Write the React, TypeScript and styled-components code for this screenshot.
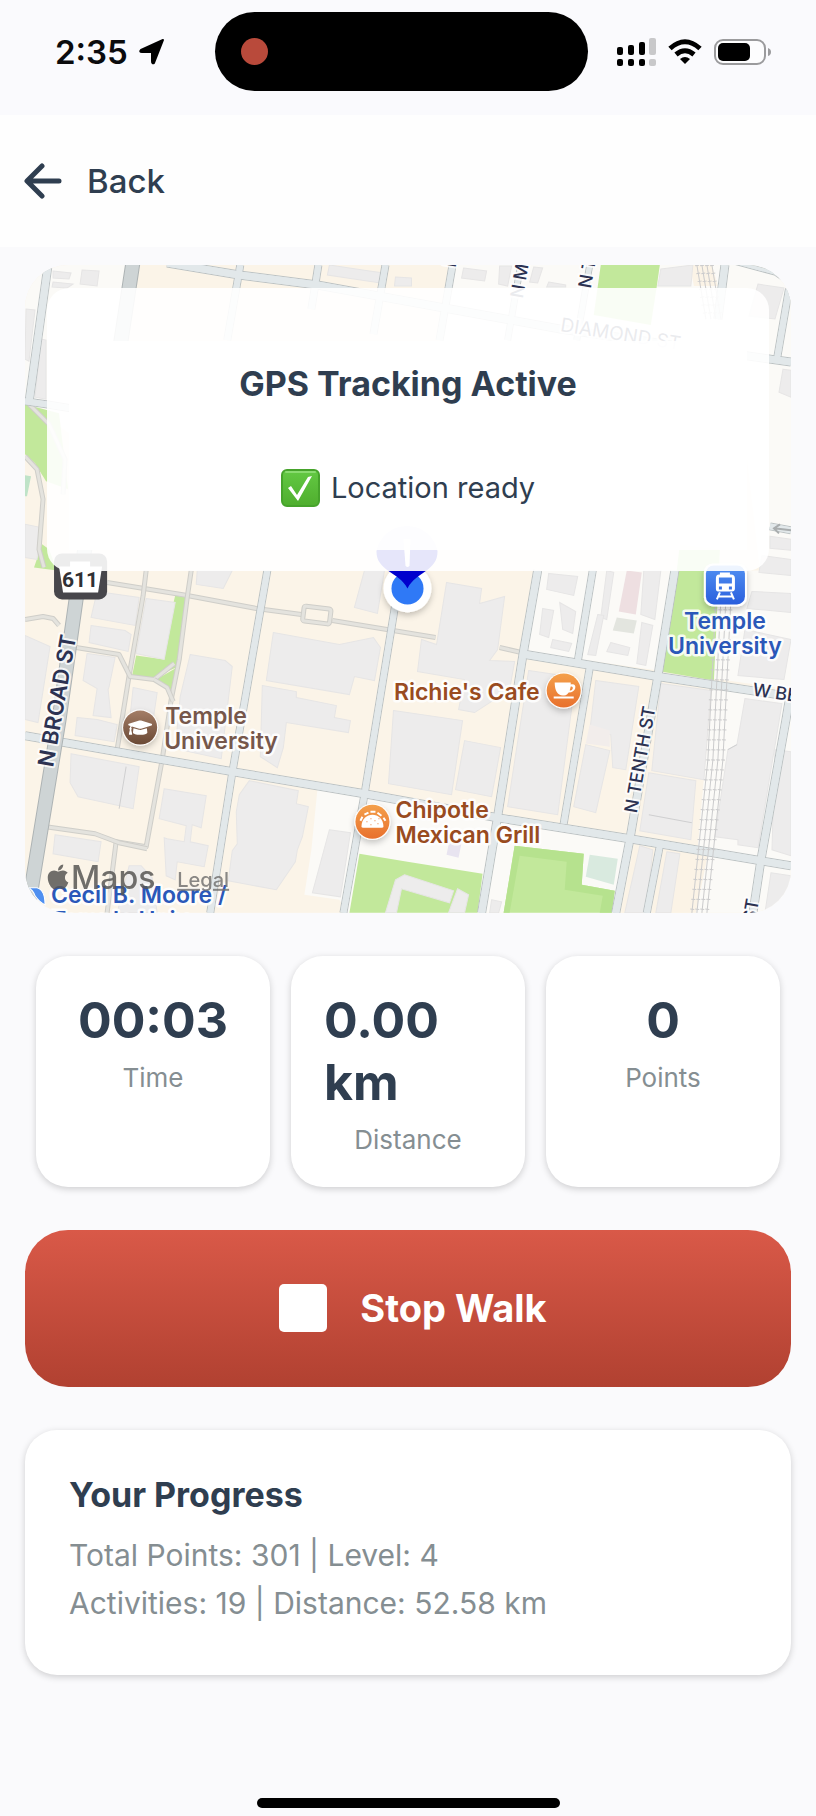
import React from "react";
import styled, { createGlobalStyle } from "styled-components";
import { FaApple, FaGraduationCap } from "react-icons/fa";

const ink = "#2f3e50";
const muted = "#858e92";

const GlobalStyle = createGlobalStyle`
  * { box-sizing: border-box; }
  body {
    margin: 0;
    background: #fafafc;
    color: ${ink};
    font-family: Inter, "Liberation Sans", sans-serif;
  }
  button { font: inherit; color: inherit; border: 0; cursor: pointer; }
  h1, h2, p, dl, dd, dt { margin: 0; }
`;

const Screen = styled.div`
  min-height: 100vh;
  display: flex;
  flex-direction: column;
`;

const StatusBar = styled.div`
  display: grid;
  grid-template-columns: 1fr 373px 1fr;
  align-items: center;
  height: 115px;
  padding: 0 45px 12px 32px;
  background: #fafafd;
  color: #0b0b0d;
`;

const Clock = styled.div`
  display: flex;
  align-items: center;
  gap: 10px;
  padding-left: 23px;
  font-size: 33px;
  font-weight: 600;
  line-height: 40px;
`;

const Island = styled.div`
  display: flex;
  align-items: center;
  height: 79px;
  padding-left: 26px;
  border-radius: 40px;
  background: #000;
`;

const RecordingDot = styled.span`
  width: 27px;
  height: 27px;
  border-radius: 50%;
  background: #b94a3b;
`;

const Indicators = styled.div`
  display: flex;
  align-items: center;
  justify-content: flex-end;
`;

const Header = styled.header`
  display: flex;
  align-items: center;
  height: 132px;
  padding: 0 24px;
  background: #fefefe;
`;

const BackButton = styled.button`
  display: flex;
  align-items: center;
  gap: 24px;
  padding: 0;
  background: none;
  font-size: 33px;
  font-weight: 500;
  line-height: 40px;
`;

const Content = styled.main`
  flex: 1;
  display: flex;
  flex-direction: column;
  gap: 43px;
  padding: 18px 25px 0;
`;

const MapCard = styled.section`
  position: relative;
  overflow: hidden;
  border-radius: 43px;
`;

const MapCanvas = styled.svg`
  display: block;
  width: 100%;
  height: auto;
`;

const StatusPanel = styled.div`
  position: absolute;
  top: 23px;
  left: 22px;
  right: 22px;
  padding: 53px 22px 21px;
  border-radius: 22px;
  background: rgba(255, 255, 255, 0.9);
`;

const StatusBody = styled.div`
  display: flex;
  flex-direction: column;
  align-items: center;
  gap: 64px;
  height: 209px;
  padding-top: 22px;
  background: rgba(255, 255, 255, 0.9);
`;

const StatusTitle = styled.h1`
  font-size: 34px;
  font-weight: 700;
  line-height: 42px;
`;

const StatusLine = styled.p`
  display: flex;
  align-items: center;
  gap: 11px;
  font-size: 29px;
  line-height: 38px;
`;

const Stats = styled.dl`
  display: grid;
  grid-template-columns: repeat(3, 1fr);
  gap: 21px;
  padding: 0 11px;
`;

const cardShadow = "0 2px 7px rgba(0, 0, 0, 0.18)";

const StatCard = styled.div`
  display: flex;
  flex-direction: column;
  align-items: center;
  gap: 11px;
  padding: 33px 33px 32px;
  border-radius: 32px;
  background: #fff;
  box-shadow: ${cardShadow};
`;

const StatValue = styled.dd`
  font-size: 50px;
  font-weight: 700;
  line-height: 62px;
`;

const StatLabel = styled.dt`
  order: 1;
  color: ${muted};
  font-size: 26px;
  line-height: 31px;
`;

const StopButton = styled.button`
  display: flex;
  align-items: center;
  justify-content: center;
  gap: 33px;
  height: 157px;
  padding: 0 6px 0 16px;
  border-radius: 43px;
  background: linear-gradient(#d95948, #b14131);
  color: #fff;
  font-size: 38px;
  font-weight: 700;
`;

const StopSquare = styled.span`
  width: 48px;
  height: 48px;
  border-radius: 5px;
  background: #fff;
`;

const ProgressCard = styled.section`
  padding: 43px 44px 36px;
  min-height: 245px;
  border-radius: 32px;
  background: #fff;
  box-shadow: ${cardShadow};
`;

const ProgressTitle = styled.h2`
  margin-bottom: 14px;
  font-size: 34px;
  font-weight: 700;
  line-height: 44px;
`;

const ProgressLine = styled.p`
  color: ${muted};
  font-size: 30px;
  line-height: 48px;
`;

const HomeBar = styled.div`
  align-self: center;
  width: 303px;
  height: 10px;
  margin: 24px 0 8px;
  border-radius: 5px;
  background: #000;
`;

const PlaceText = styled.text`
  font-weight: 600;
  font-size: 23px;
  stroke: #fff;
  stroke-opacity: 0.85;
  stroke-width: 5px;
  stroke-linejoin: round;
  paint-order: stroke;
`;

const StreetText = styled.text<{ $size: number; $weight?: number }>`
  fill: #2c3252;
  font-size: ${(p) => p.$size}px;
  font-weight: ${(p) => p.$weight ?? 500};
  stroke: #fff;
  stroke-opacity: 0.8;
  stroke-width: 4px;
  stroke-linejoin: round;
  paint-order: stroke;
`;

const brown = "#76574b";
const rust = "#994b20";
const blue = "#2b58b9";

const paleBlocks = [
  "538,571 791,571 791,690 526,652",
  "26,266 130,266 96,450 78,440 26,402",
  "451,266 791,266 791,571 760,571 740,400 440,350",
  "318,790 498,819 630,840 617,913 347,913 340,900 305,895 312,850",
  "712,690 791,697 791,913 692,913",
];

const creamBlocks = ["635,845 658,849 646,913 622,913", "664,848 708,855 696,913 652,913", "690,266 712,266 718,287 694,287"];

const parks = [
  "26,405 60,414 69,490 47,482 36,464 26,455",
  "43,545 50,550 58,571 35,568",
  "601,266 660,266 657,287 651,326 594,316",
  "176,596 188,598 182,660 177,668 152,679 133,676 137,656 165,660 168,630",
  "157,680 176,669 173,694 167,686",
  "680,545 720,550 714,681 661,672 672,612",
  "360,854 408,862 483,874 478,913 350,913",
  "515,846 584,854 582,885 615,891 612,913 504,913",
];

const buildings = [
  "83,271 100,272 98,287 81,285",
  "54,272 72,274 70,280 54,279",
  "54,283 74,285 68,289 53,288",
  "27,310 36,311 30,362 26,360",
  "42,340 47,341 47,400 36,398",
  "330,266 370,272 384,274 381,284 328,276",
  "396,278 412,279 412,287 395,287",
  "464,269 487,272 485,282 462,279",
  "500,267 512,267 508,287 499,285",
  "534,268 543,269 538,284 530,283",
  "549,283 566,286 566,288 547,288",
  "661,270 693,266 691,287 658,287",
  "758,285 784,289 775,320 749,317",
  "783,370 791,371 791,398 779,393",
  "26,525 41,528 38,560 26,558",
  "770,537 791,540 791,551 770,549",
  "762,556 791,560 791,576 759,573",
  "98,592 140,598 136,626 92,618",
  "147,599 176,603 165,660 137,654",
  "92,626 126,631 132,635 129,652 90,643",
  "26,636 51,647 39,723 26,720",
  "88,654 116,658 110,687 109,690 112,718 94,716 98,689 84,681",
  "78,718 98,720 118,725 115,742 76,736",
  "134,688 158,693 154,720 131,716",
  "191,655 226,661 233,667 222,759 176,749 181,697",
  "274,633 340,645 374,638 381,648 375,681 355,677 350,695 267,681",
  "263,686 297,692 297,698 337,706 335,718 351,721 349,733 287,723 284,748 278,768 261,757",
  "72,754 140,767 134,809 79,797 71,783",
  "165,789 207,796 202,828 193,825 191,842 209,846 205,867 178,862 176,880 167,876 165,838 168,839 185,842 187,826 160,819",
  "250,781 299,791 297,804 309,807 303,837 298,850 296,862 277,890 229,881 233,851 238,844 237,812 240,795",
  "56,835 102,842 99,862 54,854",
  "130,866 142,866 153,878 158,913 118,913",
  "330,830 351,833 341,897 313,893",
  "198,571 233,571 224,589 197,585",
  "365,571 385,571 378,614 355,608",
  "447,583 482,589 480,604 505,597 503,612 498,650 490,661 515,662 510,690 475,713 459,710 465,680 418,672 422,640 437,645",
  "394,711 463,721 452,795 389,784",
  "465,741 501,748 492,797 456,790",
  "529,671 576,678 558,815 508,807",
  "596,681 639,687 626,770 613,768 611,735 590,732",
  "586,745 610,751 596,813 574,807",
  "661,684 711,691 704,780 652,771",
  "649,773 696,781 691,840 640,831",
  "745,699 782,704 758,848 738,845 738,840 715,837 728,750 737,745",
  "775,750 791,752 791,856 772,850",
  "752,592 791,594 791,613 747,609",
  "745,630 791,640 784,680 738,676",
  "640,846 653,850 646,913 625,913",
  "667,852 680,854 671,913 656,913",
  "771,873 791,876 791,913 765,913",
  "492,900 502,902 499,913 490,913",
  "549,574 578,577 574,596 547,590",
  "543,609 554,611 549,638 540,635",
  "560,603 576,612 573,634 563,630",
  "553,640 572,644 569,652 551,648",
  "607,571 614,573 607,620 601,618",
  "644,571 661,571 655,620 641,615",
  "598,615 604,616 596,656 588,655",
  "611,643 630,648 628,656 607,652",
  "642,623 653,626 646,666 637,664",
  "405,875 454,891 450,903 402,889 397,913 386,913 396,880",
  "458,889 469,895 465,913 449,913",
];

const accentBlocks: [string, string][] = [
  ["627,571 642,573 636,615 619,612", "#eedfe1"],
  ["617,618 637,621 634,634 613,631", "#e3e5df"],
  ["590,855 618,859 614,885 586,877", "#d9eadf"],
  ["26,476 32,477 28,497 26,497", "#bfe3c8"],
  ["590,725 610,731 610,747 586,744", "#f2edeb"],
  ["450,840 462,843 459,858 447,855", "#e8e4f0"],
];

const paths = [
  "108,583 188,596 257,609 302,615",
  "333,621 436,638",
  "500,648 526,654",
  "192,571 188,598 180,660 172,700 163,760 147,847 117,842 108,913",
  "147,571 144,596 130,676 118,750",
  "77,648 120,655 131,677 155,680 175,664",
  "155,680 168,688 174,702",
  "47,827 96,834 120,843 148,849",
  "30,405 50,425 66,460 64,495",
  "26,457 38,470 44,500 40,550 45,568",
  "26,620 44,617 54,619 60,626",
];

const streets: [string, number][] = [
  ["49,266 30,403", 8],
  ["241,266 228,341", 7],
  ["319,266 312,310", 7],
  ["268,571 233,773 211,913", 7],
  ["386,266 374,335", 7],
  ["453,266 440,341", 7],
  ["402,571 395,610 365,795 344,913", 7],
  ["521,266 508,341", 6],
  ["590,266 577,341", 6],
  ["538,571 523,657 498,817 482,913", 8],
  ["593,571 578,662", 7],
  ["590,668 564,824", 7],
  ["675,571 658,677 630,840 616,913", 8],
  ["660,846 647,913", 7],
  ["725,266 718,320", 8],
  ["789,290 777,360", 7],
  ["791,690 786,720 761,860 753,913", 8],
  ["168,264 240,276 318,286 561,330 791,363", 8],
  ["26,402 47,405 200,430", 7],
  ["770,527 791,531", 7],
  ["730,262 775,274 791,285", 4],
  ["526,655 658,677 791,697", 8],
  ["26,736 60,742 163,760 233,772 365,794 498,818 630,839 761,861 791,866", 8],
];

const arterial = "134,262 122,341 77,600 60,720 28,915";

function Street({ points, width, fill = "#e2e8ea", edge = "#bcc2c3" }: { points: string; width: number; fill?: string; edge?: string }) {
  return (
    <g fill="none" strokeLinejoin="round">
      <polyline points={points} stroke={edge} strokeWidth={width + 1} />
      <polyline points={points} stroke={fill} strokeWidth={width - 1} />
    </g>
  );
}

function StreetMap() {
  return (
    <MapCanvas viewBox="26 266 765 647" role="img" aria-label="Map of the area around Temple University">
      <defs>
        <linearGradient id="poiOrange" x1="0" y1="0" x2="0" y2="1">
          <stop offset="0" stopColor="#f4a04b" />
          <stop offset="1" stopColor="#e8702d" />
        </linearGradient>
        <linearGradient id="poiBrown" x1="0" y1="0" x2="0" y2="1">
          <stop offset="0" stopColor="#a37d66" />
          <stop offset="1" stopColor="#6a4935" />
        </linearGradient>
        <linearGradient id="poiBlue" x1="0" y1="0" x2="0" y2="1">
          <stop offset="0" stopColor="#5190f2" />
          <stop offset="1" stopColor="#2a5fdd" />
        </linearGradient>
        <filter id="soft" x="-40%" y="-40%" width="180%" height="180%">
          <feDropShadow dx="0" dy="3" stdDeviation="3" floodOpacity="0.22" />
        </filter>
      </defs>

      <rect x="26" y="266" width="765" height="647" fill="#fbf4e8" />
      {paleBlocks.map((p) => <polygon key={p} points={p} fill="#fbfaf7" />)}
      {creamBlocks.map((p) => <polygon key={p} points={p} fill="#fbf3e6" />)}
      {parks.map((p) => <polygon key={p} points={p} fill="#c2e89b" />)}
      <path d="M515 846L584 854L582 885L615 891L612 913H600L603 896L565 890L567 862L520 856L510 913H504Z" fill="#b6e28e" />
      {buildings.map((p) => <polygon key={p} points={p} fill="#edecec" stroke="#e6e5e5" />)}
      {accentBlocks.map(([p, fill]) => <polygon key={p} points={p} fill={fill} />)}

      <path d="M127 767L120 809M649 815L692 823M737 745L728 750" stroke="#cfcfd0" fill="none" />
      {paths.map((p) => <Street key={p} points={p} width={4} fill="#e4e3de" edge="#cfcec9" />)}
      <rect x="304" y="608" width="27" height="15" rx="2" transform="rotate(7 317 615)" fill="#fbf4e8" stroke="#cfcec9" strokeWidth="5" />
      <rect x="304" y="608" width="27" height="15" rx="2" transform="rotate(7 317 615)" fill="none" stroke="#e4e3de" strokeWidth="3" />
      {streets.map(([p, w]) => <Street key={p} points={p} width={w} />)}
      {streets.map(([p, w]) => <polyline key={p} points={p} fill="none" strokeLinejoin="round" stroke="#e2e8ea" strokeWidth={w - 1} />)}
      <Street points={arterial} width={14} fill="#ced4d5" edge="#adb3b4" />

      {[0, 5, 10, 15].map((dx) => (
        <g key={dx} fill="none" stroke="#cbcbcc">
          <path d={`M${716 + dx} 600L${708 + dx} 760L${692 + dx} 913`} />
          <path d={`M${716 + dx} 600L${708 + dx} 760L${692 + dx} 913`} strokeWidth="4" strokeDasharray="1 9" />
          <path d={`M${697 + dx} 266L${706 + dx} 320`} />
          <path d={`M${697 + dx} 266L${706 + dx} 320`} strokeWidth="4" strokeDasharray="1 7" />
        </g>
      ))}
      <path d="M791 531L774 529M780 525L774 529L779 534" stroke="#a9adae" strokeWidth="2" fill="none" />

      <StreetText $size={22} $weight={600} transform="translate(54 768) rotate(-80)">N BROAD ST</StreetText>
      <StreetText $size={18} transform="translate(637 814) rotate(-80)">N TENTH ST</StreetText>
      <StreetText $size={18} transform="translate(752 696) rotate(8)">W BERKS ST</StreetText>
      <StreetText $size={19} $weight={400} transform="translate(560 332) rotate(9)">DIAMOND ST</StreetText>
      <StreetText $size={18} transform="translate(523 300) rotate(-80)">N MARVINE ST</StreetText>
      <StreetText $size={18} transform="translate(591 290) rotate(-80)">N TENTH ST</StreetText>
      <StreetText $size={18} transform="translate(456 269) rotate(-80)">I</StreetText>
      <StreetText $size={18} transform="translate(755 923) rotate(-80)">ST</StreetText>

      <rect x="55" y="554" width="53" height="46" rx="8" fill="#47464b" />
      <path d="M71 562H91V567H103L99 593H64L60 567H71Z" fill="#fff" />
      <text x="81" y="588" textAnchor="middle" fontSize="21" fontWeight="700" fill="#303034" fontFamily="Roboto, sans-serif">611</text>

      <g filter="url(#soft)">
        <circle cx="408" cy="589" r="24" fill="#fff" />
      </g>
      <circle cx="408" cy="589" r="16" fill="#2f79f6" />
      <path d="M377 552A31 31 0 0 1 438 552C438 572 417 572 408 589C399 572 377 572 377 552Z" fill="#0000cd" />
      <path d="M404 540H411L410 566Q408 569 406 566Z" fill="#fff" />

      <g filter="url(#soft)">
        <circle cx="141" cy="728" r="18" fill="#fff" />
        <circle cx="564" cy="691" r="18" fill="#fff" />
        <circle cx="373" cy="822" r="18" fill="#fff" />
        <rect x="704" y="564" width="43" height="43" rx="9" fill="#fff" />
      </g>
      <circle cx="141" cy="728" r="17" fill="url(#poiBrown)" />
      <FaGraduationCap x={129} y={716} size={24} color="#fff" />
      <circle cx="564" cy="691" r="17" fill="url(#poiOrange)" />
      <path d="M555 683H571V685C578 683 577 693 569 693C567 696 565 696 563 696C558 696 555 691 555 683ZM571 687L570 691C574 691 574 686 571 687ZM554 697H574V699H554Z" fill="#fff" fillRule="evenodd" />
      <circle cx="373" cy="822" r="17" fill="url(#poiOrange)" />
      <path d="M362 827C362 811 384 811 384 827Q384 828 382 828H364Q362 828 362 827Z" fill="#fff" />
      <path d="M361 821L363 817M365 815L369 813M371 812H376M378 813L382 816M384 818L386 821" stroke="#fff" strokeWidth="2" />
      <path d="M367 822H368M371 819H372M375 821H376M379 819H380M378 824H379M371 825H372" stroke="#e9823c" />
      <rect x="706" y="566" width="39" height="39" rx="8" fill="url(#poiBlue)" />
      <path d="M720 573H730V575H731Q735 575 735 579V589Q735 592 732 592H718Q716 592 716 589V579Q716 575 719 575H720ZM719 578V584H732V578ZM719 587V590H722V587ZM729 587V590H732V587Z" fill="#fff" fillRule="evenodd" />
      <path d="M720 593L717 600M731 593L734 600M719 597H732" stroke="#fff" strokeWidth="2" />

      <PlaceText x="166" y="724" fill={brown}>Temple</PlaceText>
      <PlaceText x="165" y="749" fill={brown}>University</PlaceText>
      <PlaceText x="540" y="700" textAnchor="end" fill={rust}>Richie's Cafe</PlaceText>
      <PlaceText x="396" y="818" fill={rust}>Chipotle</PlaceText>
      <PlaceText x="396" y="843" fill={rust}>Mexican Grill</PlaceText>
      <PlaceText x="725" y="630" textAnchor="middle" fill={blue}>Temple</PlaceText>
      <PlaceText x="725" y="655" textAnchor="middle" fill={blue}>University</PlaceText>

      <path d="M29 888H38Q46 890 46 905Q40 902 36 896Q34 890 29 888Z" fill="#4f8ff0" stroke="#fff" />
      <PlaceText x="52" y="903" fill={blue}>Cecil B. Moore /</PlaceText>
      <PlaceText x="52" y="928" fill={blue}>Temple Univ</PlaceText>
      <g opacity="0.85">
        <FaApple x={45} y={863} size={28} color="#575654" />
        <text x="72" y="889" fontSize="32" fontWeight="500" fill="#575654">Maps</text>
        <a href="#legal">
          <text x="178" y="887" fontSize="20" fontWeight="500" fill="#757473" textDecoration="underline">Legal</text>
        </a>
      </g>
    </MapCanvas>
  );
}

function LocationArrow() {
  return (
    <svg width="28" height="28" viewBox="0 0 28 28" aria-hidden="true">
      <path d="M25 2L16 25Q14 26 14 23V14H4Q1 14 3 12Z" fill="#000" stroke="#000" strokeWidth="2" strokeLinejoin="round" />
    </svg>
  );
}

function StatusIcons() {
  return (
    <svg width="155" height="30" viewBox="616 36 155 30" role="img" aria-label="Signal, Wi-Fi and battery">
      <g fill="#000">
        <rect x="617" y="46" width="6" height="8" rx="2" />
        <rect x="628" y="44" width="6" height="10" rx="2" />
        <rect x="639" y="41" width="6" height="13" rx="2" />
        <rect x="617" y="58" width="6" height="7" rx="2" />
        <rect x="628" y="58" width="6" height="7" rx="2" />
        <rect x="639" y="58" width="6" height="7" rx="2" />
      </g>
      <g fill="#c8c8ca">
        <rect x="649" y="37" width="7" height="17" rx="2" />
        <rect x="649" y="58" width="7" height="7" rx="2" />
      </g>
      <g fill="none" stroke="#000" strokeWidth="5">
        <path d="M670 47.5Q685 34 700 47.5" />
        <path d="M676 53.5Q685 46 694 53.5" />
      </g>
      <path d="M680 58Q685 54 690 58L685 63Z" fill="#000" />
      <rect x="715" y="39" width="50" height="24" rx="8" fill="#fdfdfe" stroke="#9b9b9d" strokeWidth="2" />
      <rect x="718" y="42" width="32" height="18" rx="5" fill="#000" />
      <path d="M768 47Q771 48 771 51T768 55Z" fill="#9b9b9d" />
    </svg>
  );
}

function BackArrow() {
  return (
    <svg width="39" height="36" viewBox="0 0 39 36" aria-hidden="true">
      <path d="M35 18H4M18 3L3 18L18 33" fill="none" stroke={ink} strokeWidth="5" strokeLinecap="round" strokeLinejoin="round" />
    </svg>
  );
}

function CheckBadge() {
  return (
    <svg width="39" height="38" viewBox="0 0 39 38" aria-hidden="true">
      <defs>
        <linearGradient id="checkFill" x1="0" y1="0" x2="0" y2="1">
          <stop offset="0" stopColor="#63c943" />
          <stop offset="1" stopColor="#4fae2e" />
        </linearGradient>
      </defs>
      <rect x="1" y="1" width="37" height="36" rx="5" fill="url(#checkFill)" stroke="#46a32b" strokeWidth="2" />
      <path d="M5 3H34" stroke="#8adb70" strokeWidth="2" strokeLinecap="round" />
      <path d="M7 19L10 17L16 26L27 8L31 7L17 32Z" fill="#fff" />
    </svg>
  );
}

const stats = [
  { label: "Time", value: "00:03" },
  { label: "Distance", value: "0.00 km" },
  { label: "Points", value: "0" },
];

export default function App() {
  return (
    <Screen>
      <GlobalStyle />
      <StatusBar>
        <Clock>2:35<LocationArrow /></Clock>
        <Island><RecordingDot /></Island>
        <Indicators><StatusIcons /></Indicators>
      </StatusBar>
      <Header>
        <BackButton type="button"><BackArrow />Back</BackButton>
      </Header>
      <Content>
        <MapCard>
          <StreetMap />
          <StatusPanel>
            <StatusBody>
              <StatusTitle>GPS Tracking Active</StatusTitle>
              <StatusLine><CheckBadge />Location ready</StatusLine>
            </StatusBody>
          </StatusPanel>
        </MapCard>
        <Stats>
          {stats.map((s) => (
            <StatCard key={s.label}>
              <StatLabel>{s.label}</StatLabel>
              <StatValue>{s.value}</StatValue>
            </StatCard>
          ))}
        </Stats>
        <StopButton type="button"><StopSquare />Stop Walk</StopButton>
        <ProgressCard>
          <ProgressTitle>Your Progress</ProgressTitle>
          <ProgressLine>Total Points: 301 | Level: 4</ProgressLine>
          <ProgressLine>Activities: 19 | Distance: 52.58 km</ProgressLine>
        </ProgressCard>
      </Content>
      <HomeBar />
    </Screen>
  );
}
